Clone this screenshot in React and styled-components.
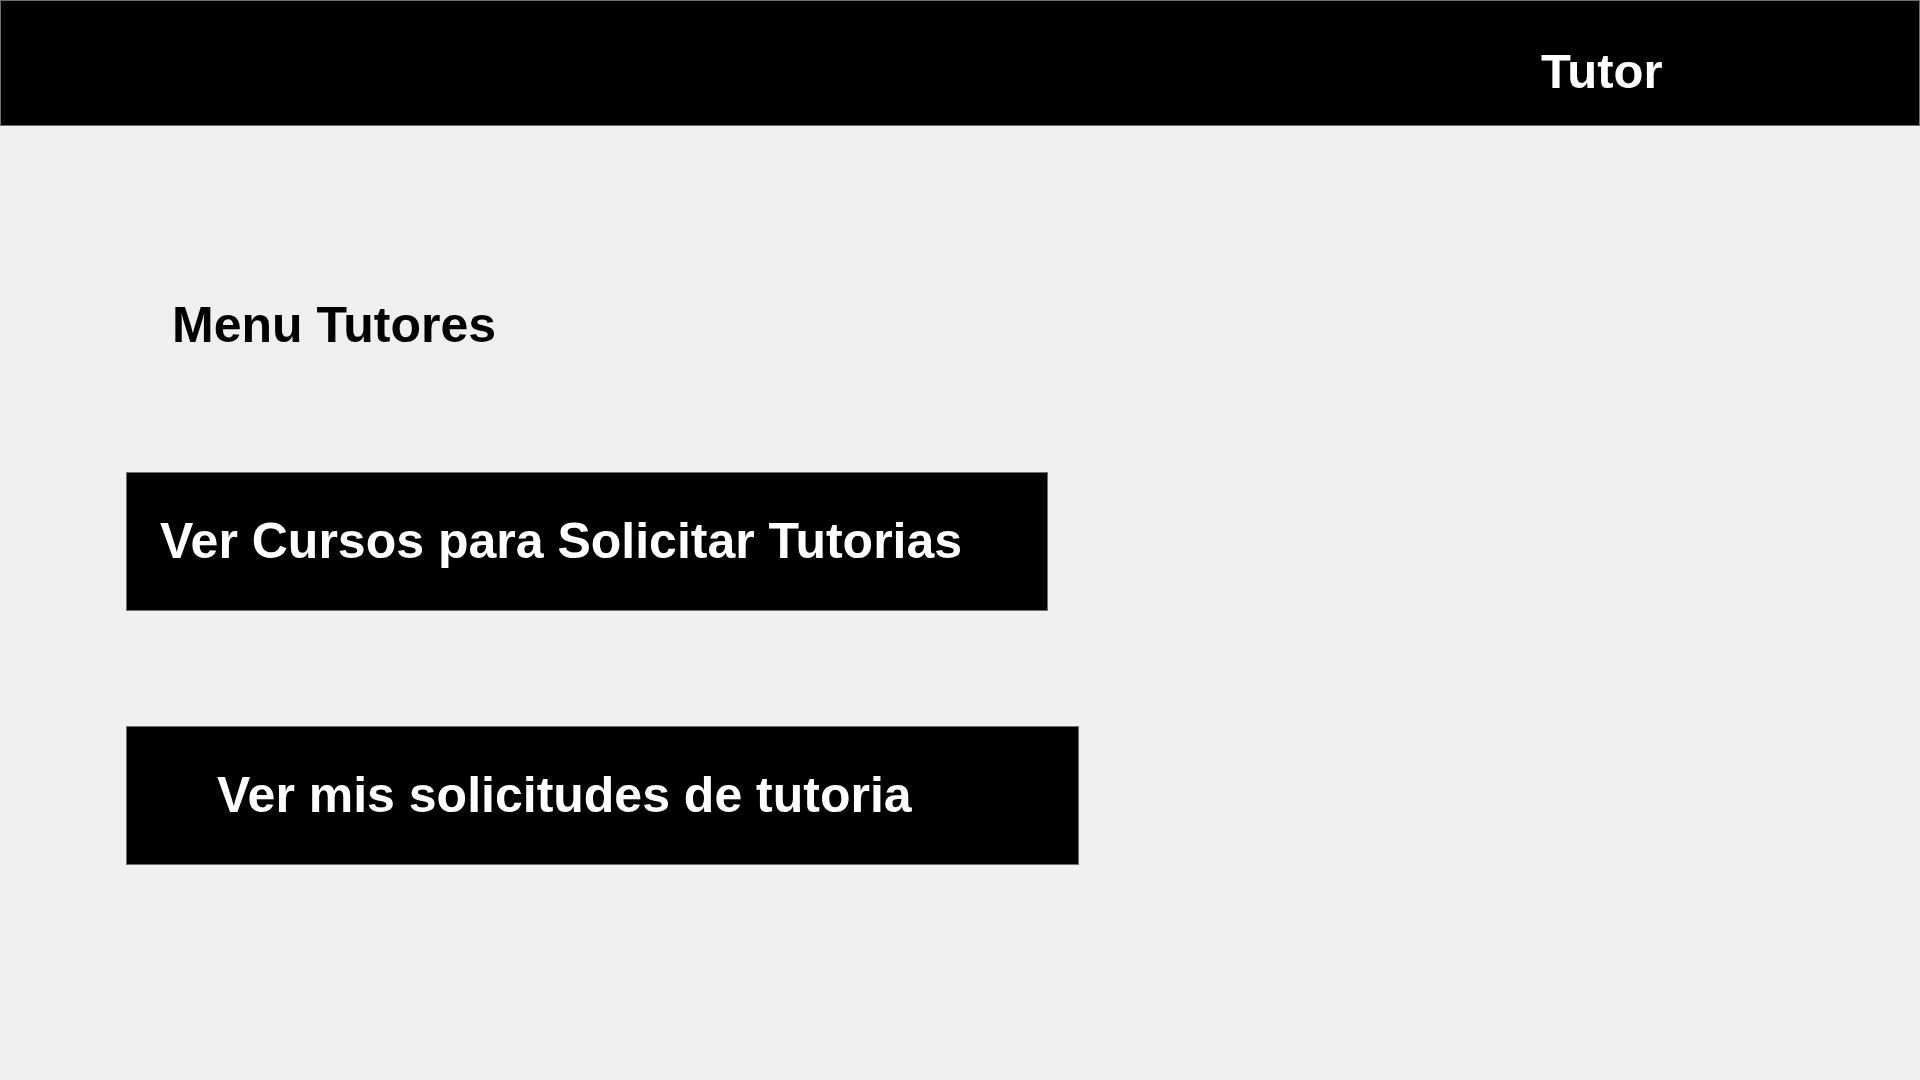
import React from "react";
import styled, { createGlobalStyle } from "styled-components";

const Global = createGlobalStyle`
  html, body { margin: 0; padding: 0; background: #f0f0f0; }
  body { font-family: "Liberation Sans", Arial, sans-serif; }
  #root { min-height: 1080px; }
`;

const Page = styled.div`
  width: 1920px;
  height: 1080px;
  background: #f0f0f0;
  display: flex;
  flex-direction: column;
  box-sizing: border-box;
  overflow: hidden;
`;

const Header = styled.header`
  height: 126px;
  box-sizing: border-box;
  background: #000;
  border: 1px solid #6e6e6e;
  display: flex;
  align-items: flex-start;
  padding: 43px 0 0 1540px;
`;

const HeaderTitle = styled.div`
  color: #fff;
  font-weight: 700;
  font-size: 49px;
  line-height: 54px;
`;

const Main = styled.main`
  display: flex;
  flex-direction: column;
  align-items: flex-start;
  padding-left: 126px;
`;

const Heading = styled.h1`
  margin: 171px 0 0 46px;
  font-size: 50px;
  line-height: 56px;
  font-weight: 700;
  color: #000;
`;

const MenuButton = styled.button`
  box-sizing: border-box;
  width: ${(p) => p.$width}px;
  height: 139px;
  margin-top: ${(p) => p.$gap}px;
  background: #000;
  border: 1px solid #6e6e6e;
  color: #fff;
  font-family: "Liberation Sans", Arial, sans-serif;
  font-weight: 700;
  font-size: 50px;
  line-height: 57px;
  text-align: left;
  padding: 0 0 0 ${(p) => p.$indent}px;
  display: block;
  cursor: pointer;
  white-space: nowrap;
`;

export default function App() {
  return (
    <Page>
      <Global />
      <Header>
        <HeaderTitle>Tutor</HeaderTitle>
      </Header>
      <Main>
        <Heading>Menu Tutores</Heading>
        <MenuButton $width={922} $gap={119} $indent={33}>
          Ver Cursos para Solicitar Tutorias
        </MenuButton>
        <MenuButton $width={953} $gap={115} $indent={90}>
          Ver mis solicitudes de tutoria
        </MenuButton>
      </Main>
    </Page>
  );
}
